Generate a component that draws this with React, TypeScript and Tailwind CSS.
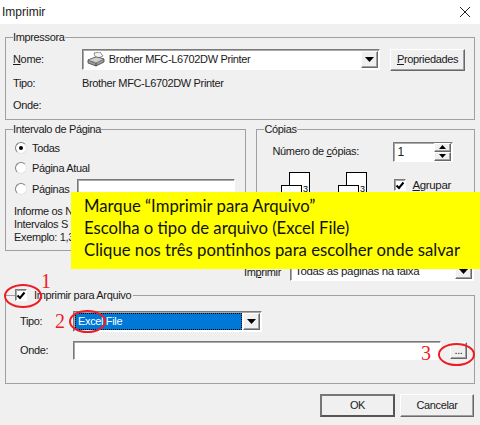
import React from "react";

const sunken = "border-t border-l border-t-[#7a7a7a] border-l-[#7a7a7a] border-b border-r border-b-[#ffffff] border-r-[#ffffff] bg-white shadow-[inset_1px_1px_0_#a8a8a8]";
const raised = "border border-t-white border-l-white border-b-[#696969] border-r-[#696969] bg-[#f0f0f0] shadow-[inset_-1px_-1px_0_#a0a0a0]";

function Arrow() {
  return (
    <div className={`${raised} flex items-center justify-center shrink-0 w-[17px] h-full`}>
      <svg width="9" height="5" viewBox="0 0 9 5"><path d="M0 0H9L4.5 5Z" fill="#000" /></svg>
    </div>
  );
}

function Radio({ on }: { on?: boolean }) {
  return (
    <div className="w-3 h-3 rounded-full bg-white border border-t-[#808080] border-l-[#808080] border-b-[#e4e4e4] border-r-[#e4e4e4] flex items-center justify-center shrink-0">
      {on && <div className="w-1 h-1 rounded-full bg-black" />}
    </div>
  );
}

function Check() {
  return (
    <div className={`${sunken} w-[12px] h-[12px] flex items-center justify-center shrink-0`}>
      <svg width="10" height="9" viewBox="0 0 10 9"><path d="M1.5 4.5L4 7L8.5 1.5" fill="none" stroke="#000" strokeWidth="2" /></svg>
    </div>
  );
}

function CopyIcon() {
  return (
    <svg width="32" height="44" viewBox="0 0 32 44" className="shrink-0">
      <rect x="8.5" y="0.5" width="20" height="26" fill="#fff" stroke="#000" />
      <rect x="0.5" y="13.5" width="20" height="26" fill="#fff" stroke="#000" />
      <text x="22" y="20" fontSize="9" fontFamily="Liberation Sans" fill="#000">3</text>
    </svg>
  );
}

function PrinterIcon() {
  return (
    <svg width="18" height="15" viewBox="0 0 18 15" className="shrink-0">
      <path d="M7 1L13 0L16 4L9 7Z" fill="#f4f4f4" stroke="#777" strokeWidth="0.8" />
      <path d="M1 8L9 5L17 7V10L9 14L1 11Z" fill="#9a9a9a" stroke="#444" strokeWidth="0.8" />
      <path d="M1 8L9 11L17 7L9 5Z" fill="#d0d0d0" stroke="#555" strokeWidth="0.6" />
      <path d="M9 11V14" stroke="#333" strokeWidth="0.8" />
      <rect x="3" y="9" width="1.5" height="1" fill="#3aa655" />
      <rect x="5" y="9.5" width="1.5" height="1" fill="#d04040" />
    </svg>
  );
}

function Oval({ className }: { className: string }) {
  return <div className={`absolute rounded-[50%] border-2 border-[#ee1c25] ${className}`} />;
}

function Num({ children, className }: { children: React.ReactNode; className: string }) {
  return (
    <div className={`absolute font-['Liberation_Serif',serif] text-[20px] leading-[20px] tracking-normal text-[#ee1c25] ${className}`}>{children}</div>
  );
}

const fs = "border border-[#a0a0a0] min-w-0";
const lg = "ml-[7px] leading-[14px] h-[14px]";

export default function App() {
  return (
    <div className="relative w-[480px] h-[425px] overflow-hidden bg-[#f0f0f0] font-['Liberation_Sans',sans-serif] text-[11px] tracking-[-0.35px] text-[#1a1a1a]">
      <div className="h-6 bg-white flex items-center justify-between pl-[2px] pr-[10px]">
        <span className="text-[12px] tracking-normal">Imprimir</span>
        <svg width="10" height="10" viewBox="0 0 10 10"><path d="M0 0L10 10M10 0L0 10" stroke="#222" strokeWidth="1" /></svg>
      </div>

      <div className="px-[5px] pt-[6px]">
        <fieldset className={`${fs} h-[90px] w-[470px]`}>
          <legend className={lg}>Impressora</legend>
          <div className="pt-[5px] pl-[7px] pr-[9px] flex flex-col">
            <div className="flex items-center h-[21px]">
              <span className="w-[69px]"><u>N</u>ome:</span>
              <div className={`${sunken} w-[299px] h-[21px] flex items-center pl-1 gap-[4px] pr-px py-px`}>
                <PrinterIcon />
                <span className="flex-1">Brother MFC-L6702DW Printer</span>
                <Arrow />
              </div>
              <div className={`${raised} ml-[10px] w-[75px] h-[22px] flex items-center justify-center`}>
                <span><u>P</u>ropriedades</span>
              </div>
            </div>
            <div className="flex items-center h-4 mt-[5px]">
              <span className="w-[69px]">Tipo:</span>
              <span>Brother MFC-L6702DW Printer</span>
            </div>
            <div className="flex items-center h-4 mt-[6px]">
              <span>Onde:</span>
            </div>
          </div>
        </fieldset>

        <div className="flex mt-[2px] gap-[10px]">
          <fieldset className={`${fs} w-[242px] h-[129px]`}>
            <legend className={lg}>Intervalo de Página</legend>
            <div className="pl-[9px] pt-[2px] flex flex-col">
              <div className="flex items-center gap-[5px] h-[20px]"><Radio on /><span>Todas</span></div>
              <div className="flex items-center gap-[5px] h-[20px]"><Radio /><span>Página Atual</span></div>
              <div className="flex items-center gap-[5px] h-[22px]">
                <Radio /><span className="w-[40px]">Páginas</span>
                <div className={`${sunken} w-[158px] h-[20px]`} />
              </div>
            </div>
            <div className="pl-2 pt-[5px] leading-[13px] whitespace-nowrap">
              <div>Informe os N</div>
              <div>Intervalos S</div>
              <div>Exemplo: 1,3</div>
            </div>
          </fieldset>

          <fieldset className={`${fs} w-[219px] h-[129px]`}>
            <legend className={lg}>Cópias</legend>
            <div className="pl-[15px] flex items-center h-[21px] mt-[5px]">
              <span className="w-[121px]">Número de <u>c</u>ópias:</span>
              <div className={`${sunken} w-[60px] h-[20px] flex items-center pl-[3px] pr-px`}>
                <span className="flex-1 text-[12px]">1</span>
                <div className="flex flex-col w-[17px] h-full">
                  <div className={`${raised} flex-1 flex items-center justify-center`}><svg width="7" height="4" viewBox="0 0 7 4"><path d="M3.5 0L7 4H0Z" /></svg></div>
                  <div className={`${raised} flex-1 flex items-center justify-center`}><svg width="7" height="4" viewBox="0 0 7 4"><path d="M0 0H7L3.5 4Z" /></svg></div>
                </div>
              </div>
            </div>
            <div className="flex pl-6 pt-[10px]">
              <CopyIcon />
              <div className="w-[25px]" />
              <CopyIcon />
              <div className="flex items-start gap-[6px] ml-[24px] pt-[7px]">
                <Check /><span className="leading-[12px] text-[11.5px]"><u>A</u>grupar</span>
              </div>
            </div>
          </fieldset>
        </div>

        <div className="flex justify-end items-center h-[20px] mt-[10px] mb-[7px] pr-px">
          <span className="mr-[9px] pt-[3px]">Im<u>p</u>rimir</span>
          <div className={`${sunken} w-[184px] h-[20px] flex items-center pl-1 pr-px py-px`}>
            <span className="flex-1 text-[11.5px] pt-[2px]">Todas as páginas na faixa</span>
            <Arrow />
          </div>
        </div>

        <fieldset className={`${fs} w-[470px] h-[96px]`}>
          <legend className={`${lg} flex items-center ml-[9px] pr-[2px] bg-[#f0f0f0]`}>
            <Check />
            <span className="ml-[7px]">Imprimir para Arquivo</span>
          </legend>
          <div className="pl-[14px] pt-[9px] flex flex-col">
            <div className="flex items-center h-[21px]">
              <span className="w-[53px]">Tipo:</span>
              <div className={`${sunken} w-[189px] h-[21px] flex pr-px p-px`}>
                <div className="flex-1 bg-[#0078d7] border border-dotted border-black text-white flex items-center pl-[2px] mr-px">Excel File</div>
                <Arrow />
              </div>
            </div>
            <div className="flex items-center h-[19px] mt-[9px]">
              <span className="w-[53px]">Onde:</span>
              <div className={`${sunken} w-[368px] h-[19px]`} />
              <div className={`${raised} ml-[9px] w-[17px] h-[17px] flex items-center justify-center`}>...</div>
            </div>
          </div>
        </fieldset>

        <div className="flex justify-end gap-[5px] mt-[10px] pr-px">
          <div className="w-[75px] h-[23px] border-2 border-[#555] border-t-[#777] border-l-[#777] flex items-center justify-center">OK</div>
          <div className={`${raised} w-[74px] h-[23px] flex items-center justify-center`}>Cancelar</div>
        </div>
      </div>

      <div className="absolute left-[71px] top-[192px] w-[409px] h-[77px] bg-[#ffff00] pl-[13px] pt-[3px] font-['Lato',sans-serif] text-[16.7px] leading-[22px] tracking-normal text-[#111] whitespace-nowrap">
        <div>Marque “Imprimir para Arquivo”</div>
        <div>Escolha o tipo de arquivo (Excel File)</div>
        <div>Clique nos três pontinhos para escolher onde salvar</div>
      </div>

      <Oval className="left-[4px] top-[284px] w-[38px] h-[24px]" />
      <Oval className="left-[69px] top-[310px] w-[37px] h-[23px]" />
      <Oval className="left-[438px] top-[343px] w-[37px] h-[23px]" />
      <Num className="left-[41px] top-[271px]">1</Num>
      <Num className="left-[55px] top-[311px]">2</Num>
      <Num className="left-[421px] top-[343px]">3</Num>
    </div>
  );
}
